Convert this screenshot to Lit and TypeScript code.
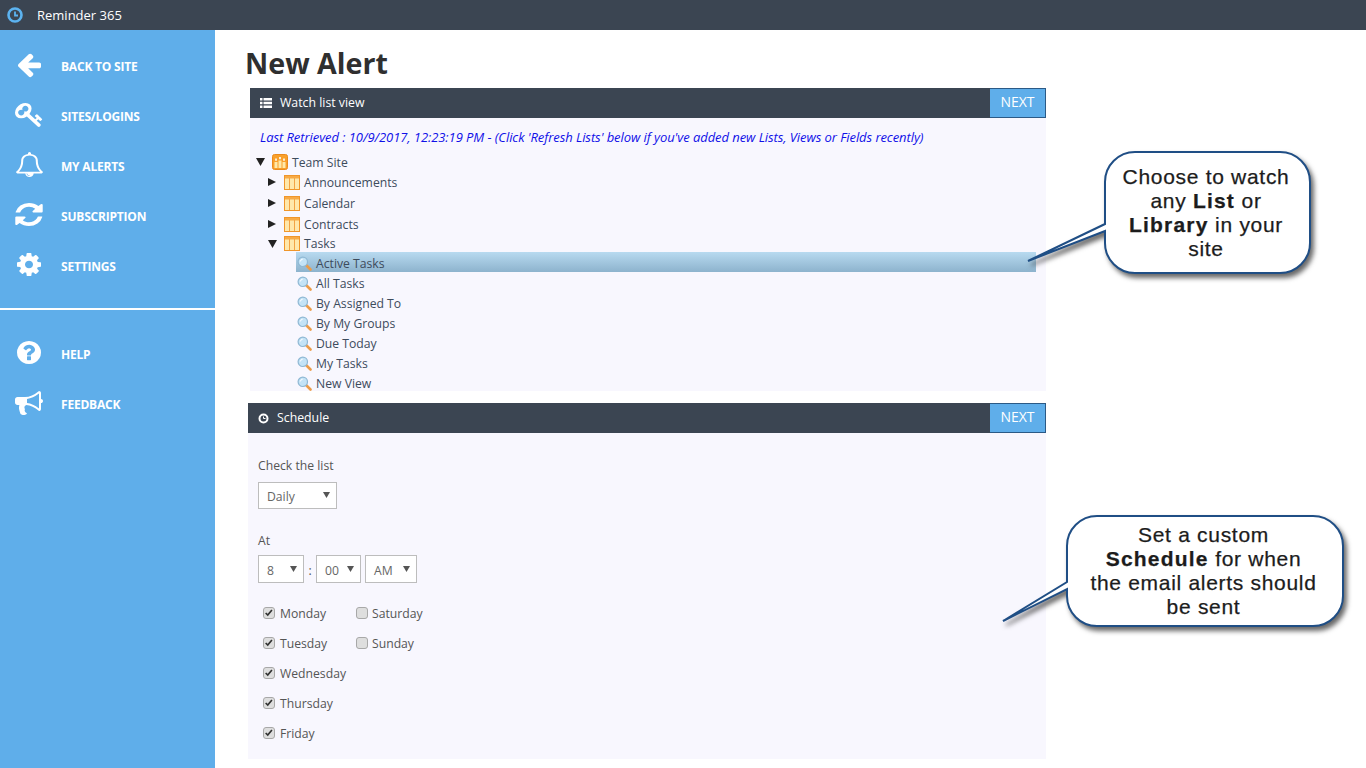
import { LitElement, html, css, svg } from "lit";
import { customElement } from "lit/decorators.js";

const FA = {
  back: "M1664 896v128q0 53-32.5 89.5t-84.5 36.5h-704l293 294q38 36 38 90t-38 90l-75 76q-38 38-90 38-53 0-91-38l-651-652q-38-36-38-90 0-53 38-91l651-650q37-38 91-38 53 0 90 38l75 74q38 38 38 91t-38 91l-293 293h704q52 0 84.5 37.5t32.5 90.5z",
  key: "M832 512q0-80-56-136t-136-56-136 56-56 136q0 42 19 83-41-19-83-19-80 0-136 56t-56 136 56 136 136 56 136-56 56-136q0-42-19-83 41 19 83 19 80 0 136-56t56-136zm851 704q0 17-49 66t-66 49q-9 0-28.5-16t-36.5-33-38.5-40-24.5-26l-96 96 220 220q28 28 28 68 0 42-39 81t-81 39q-40 0-68-28l-671-671q-176 131-365 131-163 0-265.5-102.5t-102.5-265.5q0-160 95-313t248-248 313-95q163 0 265.5 102.5t102.5 265.5q0 189-131 365l355 355 96-96q-3-3-26-24.5t-40-38.5-33-36.5-16-28.5q0-17 49-66t66-49q13 0 23 10 6 6 46 44.5t82 79.5 86.5 86 73 78 28.5 41z",
  bell: "M912 1696q0-16-16-16-59 0-101.5-42.5t-42.5-101.5q0-16-16-16t-16 16q0 73 51.5 124.5t124.5 51.5q16 0 16-16zm-666-288h1300q-266-300-266-832 0-51-24-105t-69-103-121.5-80.5-169.5-31.5-169.5 31.5-121.5 80.5-69 103-24 105q0 532-266 832zm1482 0q0 52-38 90t-90 38h-448q0 106-75 181t-181 75-181-75-75-181h-448q-52 0-90-38t-38-90q50-42 91-88t85-119.5 74.5-158.5 50-206 19.5-260q0-152 117-282.5t307-158.5q-8-19-8-39 0-40 28-68t68-28 68 28 28 68q0 20-8 39 190 28 307 158.5t117 282.5q0 139 19.5 260t50 206 74.5 158.5 85 119.5 91 88z",
  refresh: "M1639 1056q0 5-1 7-64 268-268 434.5t-478 166.5q-146 0-282.5-55t-243.5-157l-129 129q-19 19-45 19t-45-19-19-45v-448q0-26 19-45t45-19h448q26 0 45 19t19 45-19 45l-137 137q71 66 161 102t187 36q134 0 250-65t186-179q11-17 53-117 8-23 30-23h192q13 0 22.5 9.5t9.5 22.5zm25-800v448q0 26-19 45t-45 19h-448q-26 0-45-19t-19-45 19-45l138-138q-148-137-349-137-134 0-250 65t-186 179q-11 17-53 117-8 23-30 23h-199q-13 0-22.5-9.5t-9.5-22.5v-7q65-268 270-434.5t480-166.5q146 0 284 55.5t245 156.5l130-129q19-19 45-19t45 19 19 45z",
  cog: "M1152 896q0-106-75-181t-181-75-181 75-75 181 75 181 181 75 181-75 75-181zm512-109v222q0 12-8 23t-20 13l-185 28q-19 54-39 91 35 50 107 138 10 12 10 25t-9 23q-27 37-99 108t-94 71q-12 0-26-9l-138-108q-44 23-91 38-16 136-29 186-7 28-36 28h-222q-14 0-24.5-8.5t-11.5-21.5l-28-184q-49-16-90-37l-141 107q-10 9-25 9-14 0-25-11-126-114-165-168-7-10-7-23 0-12 8-23 15-21 51-66.5t54-70.5q-27-50-41-99l-183-27q-13-2-21-12.5t-8-23.5v-222q0-12 8-23t19-13l186-28q14-46 39-92-40-57-107-138-10-12-10-24 0-10 9-23 26-36 98.5-107.5t94.5-71.5q13 0 26 10l138 107q44-23 91-38 16-136 29-186 7-28 36-28h222q14 0 24.5 8.5t11.5 21.5l28 184q49 16 90 37l142-107q9-9 24-9 13 0 25 10 129 119 165 170 7 8 7 22 0 12-8 23-15 21-51 66.5t-54 70.5q26 50 41 98l183 28q13 2 21 12.5t8 23.5z",
  help: "M1024 1376v-192q0-14-9-23t-23-9h-192q-14 0-23 9t-9 23v192q0 14 9 23t23 9h192q14 0 23-9t9-23zm256-672q0-88-55.5-163t-138.5-116-170-41q-243 0-371 213-15 24 8 42l132 100q7 6 19 6 16 0 25-12 53-68 86-92 34-24 86-24 48 0 85.5 26t37.5 59q0 38-20 61t-68 45q-63 28-115.5 86.5t-52.5 125.5v36q0 14 9 23t23 9h192q14 0 23-9t9-23q0-19 21.5-49.5t54.5-49.5q32-18 49-28.5t46-35 44.5-48 28-60.5 12.5-81zm384 192q0 209-103 385.5t-279.5 279.5-385.5 103-385.5-103-279.5-279.5-103-385.5 103-385.5 279.5-279.5 385.5-103 385.5 103 279.5 279.5 103 385.5z",
  horn: "M1664 640q53 0 90.5 37.5t37.5 90.5-37.5 90.5-90.5 37.5v384q0 52-38 90t-90 38q-417-347-812-380-58 19-91 66t-31 100.5 40 92.5q-20 33-23 65.5t6 58 33.5 55 48 50 61.5 50.5q-29 58-111.5 83t-168.5 11.5-132-55.5q-7-23-29.5-87.5t-32-94.5-23-89-15-101 3.5-98.5 22-110.5h-122q-66 0-113-47t-47-113v-192q0-66 47-113t113-47h480q435 0 896-384 52 0 90 38t38 90v384zm-128 604v-954q-394 302-768 343v270q377 42 768 341z",
};

// icon key, label, drawn width, drawn height, left nudge
type NavEntry = readonly [keyof typeof FA, string, number, number, number];

const navTop: NavEntry[] = [
  ["back", "BACK TO SITE", 28, 27, 0],
  ["key", "SITES/LOGINS", 29, 27, 0],
  ["bell", "MY ALERTS", 29, 25, 0],
  ["refresh", "SUBSCRIPTION", 32, 27, -2],
  ["cog", "SETTINGS", 28, 27, 0],
];
const navBottom: NavEntry[] = [
  ["help", "HELP", 28, 27, 0],
  ["horn", "FEEDBACK", 28, 28, 0],
];

const lists = [
  { name: "Announcements", cls: "" },
  { name: "Calendar", cls: "gap" },
  { name: "Contracts", cls: "gap" },
  { name: "Tasks", cls: "tight", open: true },
];
const views = ["Active Tasks", "All Tasks", "By Assigned To", "By My Groups", "Due Today", "My Tasks", "New View"];
const days = [
  ["Monday", true],
  ["Tuesday", true],
  ["Wednesday", true],
  ["Thursday", true],
  ["Friday", true],
  ["Saturday", false],
  ["Sunday", false],
] as const;

const tableIcon = html`<svg class="table-icon" width="16" height="15" viewBox="0 0 16 15">
  <rect x=".5" y=".5" width="15" height="14" fill="#ffe8ab" stroke="#f0962a"></rect>
  <rect x="1" y="1" width="14" height="2.500" fill="#f7aa45"></rect>
  <path d="M5.500 3v11M10.500 3v11" stroke="#f2a445" fill="none"></path>
</svg>`;

const siteIcon = html`<svg width="16" height="16" viewBox="0 0 16 16">
  <rect x=".5" y=".5" width="15" height="15" rx="2" fill="#f9a02a" stroke="#ea8a1e"></rect>
  <path d="M2.500 14V8h3v6zM6.500 14V6.500h3V14zM10.500 14V8h3v6z" fill="#ffe9a8"></path>
  <path d="M3.200 4.500h1.600v2.200H3.200zM7.200 3h1.600v2.200H7.200zM11.200 4.500h1.600v2.200h-1.600z" fill="#fff"></path>
</svg>`;

const lensIcon = html`<svg class="lens" width="15" height="15" viewBox="0 0 15 15">
  <path d="M9 9l4.500 4.500" stroke="#ec9c48" stroke-width="2.600" stroke-linecap="round"></path>
  <circle cx="5.800" cy="5.800" r="4.700" fill="#c4e3f6" stroke="#8fb8d4" stroke-width="1.200"></circle>
  <path d="M3.300 5.500a2.700 2.700 0 0 1 2.400-2.300" stroke="#fff" fill="none"></path>
</svg>`;

const caret = html`<svg class="caret" width="7" height="6" viewBox="0 0 7 6"><path d="M0 0h7L3.500 6z" fill="#555"></path></svg>`;

/* the two speech bubbles, in page coordinates */
const callouts = [
  {
    x: 1105, y: 152, w: 205, h: 121, r: 30,
    tail: [[1105, 224], [1028, 261], [1105, 231]],
    lines: [html`Choose to watch`, html`any <b>List</b> or`, html`<b>Library</b> in your`, html`site`],
  },
  {
    x: 1067, y: 516, w: 276, h: 110, r: 30,
    tail: [[1067, 582], [1003, 621], [1067, 589]],
    lines: [html`Set a custom`, html`<b>Schedule</b> for when`, html`the email alerts should`, html`be sent`],
  },
];

const bubblePath = (c: (typeof callouts)[number]) => {
  const [a, tip, b] = c.tail;
  const { x, y, w, h, r } = c;
  const arc = `A${r} ${r} 0 0 1`;
  return (
    `M${x + r} ${y}H${x + w - r}${arc} ${x + w} ${y + r}V${y + h - r}` +
    `${arc} ${x + w - r} ${y + h}H${x + r}${arc} ${x} ${y + h - r}` +
    `V${b[1]}L${tip[0]} ${tip[1]}L${a[0]} ${a[1]}V${y + r}${arc} ${x + r} ${y}Z`
  );
};

@customElement("app-root")
export class AppRoot extends LitElement {
  static styles = css`
    :host {
      display: block;
      position: relative;
      width: 1366px;
      height: 768px;
      overflow: hidden;
      background: #fff;
      font-family: "Open Sans", "Noto Sans", sans-serif;
    }

    .topbar {
      height: 30px;
      background: #3b4552;
      display: flex;
      align-items: center;
      padding-left: 7px;
      color: #fff;
      font-size: 13px;
    }

    .topbar span {
      margin-left: 14px;
    }

    .layout {
      display: flex;
      height: 738px;
    }

    .sidebar {
      width: 215px;
      background: #5faeea;
      padding-top: 11px;
      box-sizing: border-box;
      flex: none;
    }

    .nav-item {
      height: 50px;
      display: flex;
      align-items: center;
      color: #fff;
      font-size: 12px;
      font-weight: 700;
      padding-left: 15px;
      letter-spacing: -0.2px;
    }

    .nav-slot {
      width: 46px;
      flex: none;
      display: flex;
      align-items: center;
      padding-bottom: 3px;
    }

    .nav-slot svg {
      display: block;
      flex: none;
    }

    .sidebar hr {
      border: 0;
      height: 2px;
      background: #fff;
      margin: 17px 0 19px;
    }

    .main {
      flex: 1;
      padding-left: 31px;
    }

    h1 {
      margin: 0 0 0 -1px;
      height: 58px;
      line-height: 66px;
      font-size: 28.600px;
      font-weight: 700;
      color: #2f2f2f;
    }

    .panel {
      background: #f8f7fe;
      overflow: hidden;
    }

    .watch {
      width: 796px;
      height: 303px;
      margin-left: 4px;
    }

    .schedule {
      width: 798px;
      height: 356px;
      margin: 12px 0 0 2px;
    }

    .head {
      height: 30px;
      background: #3b4552;
      color: #fff;
      display: flex;
      align-items: center;
      font-size: 12.300px;
    }

    .head svg {
      margin: 0 8px 0 10px;
    }

    .head .title {
      margin-bottom: 2px;
    }

    .next {
      margin-left: auto;
      width: 55px;
      height: 28px;
      background: #5faeea;
      border: 1px solid #2b5a86;
      border-width: 1px 1px 1px 0;
      color: #fff;
      font-size: 14px;
      line-height: 26px;
      text-align: center;
    }

    .retrieved {
      color: #1010e8;
      font-style: italic;
      font-size: 13px;
      height: 20px;
      line-height: 20px;
      padding: 9px 0 5px 10px;
      white-space: nowrap;
      letter-spacing: -0.07px;
    }

    .row {
      display: flex;
      align-items: center;
      height: 20px;
      font-size: 12.200px;
      color: #3d4b5c;
    }

    .row.site {
      padding-left: 5px;
    }

    .row.list {
      padding-left: 17px;
    }

    .row.gap {
      margin-top: 1px;
    }

    .row.tight {
      height: 18px;
      padding-top: 1px;
      box-sizing: border-box;
    }

    .tri {
      width: 12px;
      height: 10px;
      margin-right: 5px;
      flex: none;
      fill: #222;
    }

    .row.site svg + svg {
      margin-right: 4px;
    }

    .table-icon {
      margin-right: 4px;
    }

    .view {
      display: flex;
      align-items: center;
      height: 20px;
      width: 740px;
      margin-left: 46px;
      font-size: 12.200px;
      color: #3d4b5c;
      padding-top: 3px;
      box-sizing: border-box;
    }

    .view.on {
      background: linear-gradient(#b8daf0, #8db3cd);
    }

    .lens {
      margin: 0 4px 0 1px;
    }

    .form {
      padding: 22px 0 0 10px;
      font-size: 12.200px;
      color: #555;
    }

    .label {
      height: 20px;
      line-height: 22px;
    }

    .select {
      position: relative;
      box-sizing: border-box;
      background: #fff;
      border: 1px solid #bdbdbd;
      color: #666;
      display: flex;
      align-items: center;
      padding: 2px 0 0 8px;
      height: 28px;
    }

    .caret {
      position: absolute;
      right: 6px;
      top: 10px;
    }

    .daily {
      width: 79px;
      height: 27px;
      margin-top: 7px;
    }

    .daily .caret {
      top: 9px;
    }

    .at {
      margin-top: 21px;
    }

    .time {
      display: flex;
      align-items: center;
      margin-top: 5px;
    }

    .time .colon {
      width: 12px;
      text-align: center;
      padding-top: 3px;
    }

    .time .gap4 {
      margin-left: 4px;
    }

    .days {
      display: grid;
      grid-auto-flow: column;
      grid-template-rows: repeat(5, 30px);
      grid-template-columns: 93px auto;
      justify-content: start;
      margin: 15px 0 0 5px;
    }

    .day {
      display: flex;
      align-items: center;
    }

    .box {
      box-sizing: border-box;
      width: 12px;
      height: 12px;
      border: 1px solid #a8a8a8;
      border-radius: 3px;
      background: #dedede;
      margin-right: 5px;
      flex: none;
      display: block;
    }

    .day.late .box {
      margin-right: 4px;
    }

    .overlay {
      position: absolute;
      left: 0;
      top: 0;
      pointer-events: none;
    }

    .bubble-shape {
      fill: #fff;
      stroke: #1f4e85;
      stroke-width: 2;
      filter: drop-shadow(3px 4px 2.500px rgba(40, 40, 40, 0.7));
    }

    .bubble-text {
      position: absolute;
      box-sizing: border-box;
      display: flex;
      flex-direction: column;
      align-items: center;
      justify-content: center;
      padding-right: 3px;
      font-family: "Liberation Sans", Arial, sans-serif;
      font-size: 21px;
      line-height: 24px;
      letter-spacing: 0.7px;
      -webkit-text-stroke: 0.25px #1c1c1c;
      color: #1c1c1c;
      white-space: nowrap;
    }

    .bubble-text b {
      letter-spacing: 1.2px;
    }
  `;

  renderNav([icon, label, w, h, dx]: NavEntry) {
    return html`<div class="nav-item">
      <div class="nav-slot">
        <svg
          viewBox="0 0 1792 1792"
          preserveAspectRatio="none"
          width=${w}
          height=${h}
          style="margin-left:${dx}px"
        >
          <path fill="#fff" d=${FA[icon]}></path>
        </svg>
      </div>
      ${label}
    </div>`;
  }

  renderTime(label: string, width: number, cls = "") {
    return html`<div class="select ${cls}" style="width:${width}px">${label}${caret}</div>`;
  }

  render() {
    return html`
      <div class="topbar">
        <svg width="16" height="16" viewBox="0 0 16 16" fill="none" stroke="#5cb3f0" stroke-width="2.600">
          <circle cx="8" cy="8" r="6.500"></circle>
          <path d="M8 4.500V8.500H11" stroke-width="1.800"></path>
        </svg>
        <span>Reminder 365</span>
      </div>
      <div class="layout">
        <nav class="sidebar">
          ${navTop.map((n) => this.renderNav(n))}
          <hr />
          ${navBottom.map((n) => this.renderNav(n))}
        </nav>
        <main class="main">
          <h1>New Alert</h1>
          <section class="panel watch">
            <div class="head">
              <svg width="12" height="10" viewBox="0 0 12 10" fill="#fff">
                <path d="M0 0h2.500v2.500H0zM3.500 0H12v2.500H3.500zM0 3.700h2.500v2.500H0zM3.500 3.700H12v2.500H3.500zM0 7.400h2.500V10H0zM3.500 7.400H12V10H3.500z"></path>
              </svg>
              <span class="title">Watch list view</span>
              <div class="next">NEXT</div>
            </div>
            <div class="retrieved">
              Last Retrieved : 10/9/2017, 12:23:19 PM - (Click 'Refresh Lists' below if you've added new Lists, Views or Fields recently)
            </div>
            <div class="row site">
              <svg class="tri" viewBox="0 0 12 10"><path d="M1 1h9L5.500 9z"></path></svg>
              ${siteIcon} Team Site
            </div>
            ${lists.map(
              (l) => html`<div class="row list ${l.cls}">
                <svg class="tri" viewBox="0 0 12 10">
                  <path d=${l.open ? "M1 1h9L5.500 9z" : "M1 1l8 4-8 4z"}></path>
                </svg>
                ${tableIcon} ${l.name}
              </div>`,
            )}
            ${views.map(
              (v, i) => html`<div class="view ${i === 0 ? "on" : ""}">${lensIcon}${v}</div>`,
            )}
          </section>
          <section class="panel schedule">
            <div class="head">
              <svg width="11" height="11" viewBox="0 0 11 11" fill="none" stroke="#fff">
                <circle cx="5.500" cy="5.500" r="4" stroke-width="2"></circle>
                <path d="M5.500 3.500v2h2"></path>
              </svg>
              <span class="title">Schedule</span>
              <div class="next">NEXT</div>
            </div>
            <div class="form">
              <div class="label">Check the list</div>
              <div class="select daily">Daily${caret}</div>
              <div class="label at">At</div>
              <div class="time">
                ${this.renderTime("8", 46)}
                <span class="colon">:</span>
                ${this.renderTime("00", 45)} ${this.renderTime("AM", 52, "gap4")}
              </div>
              <div class="days">
                ${days.map(
                  ([d, on], i) => html`<label class="day ${i > 4 ? "late" : ""}">
                    <svg class="box" viewBox="0 0 12 12">
                      ${on ? svg`<path d="M2 6l2.500 2.500L9.500 2.500" fill="none" stroke="#333" stroke-width="2"></path>` : ""}
                    </svg>
                    ${d}
                  </label>`,
                )}
              </div>
            </div>
          </section>
        </main>
      </div>
      <svg class="overlay" width="1366" height="768">
        ${callouts.map((c) => svg`<path class="bubble-shape" d=${bubblePath(c)}></path>`)}
      </svg>
      ${callouts.map(
        (c) => html`<div
          class="bubble-text"
          style="left:${c.x}px;top:${c.y}px;width:${c.w}px;height:${c.h}px"
        >
          ${c.lines.map((l) => html`<div>${l}</div>`)}
        </div>`,
      )}
    `;
  }
}
